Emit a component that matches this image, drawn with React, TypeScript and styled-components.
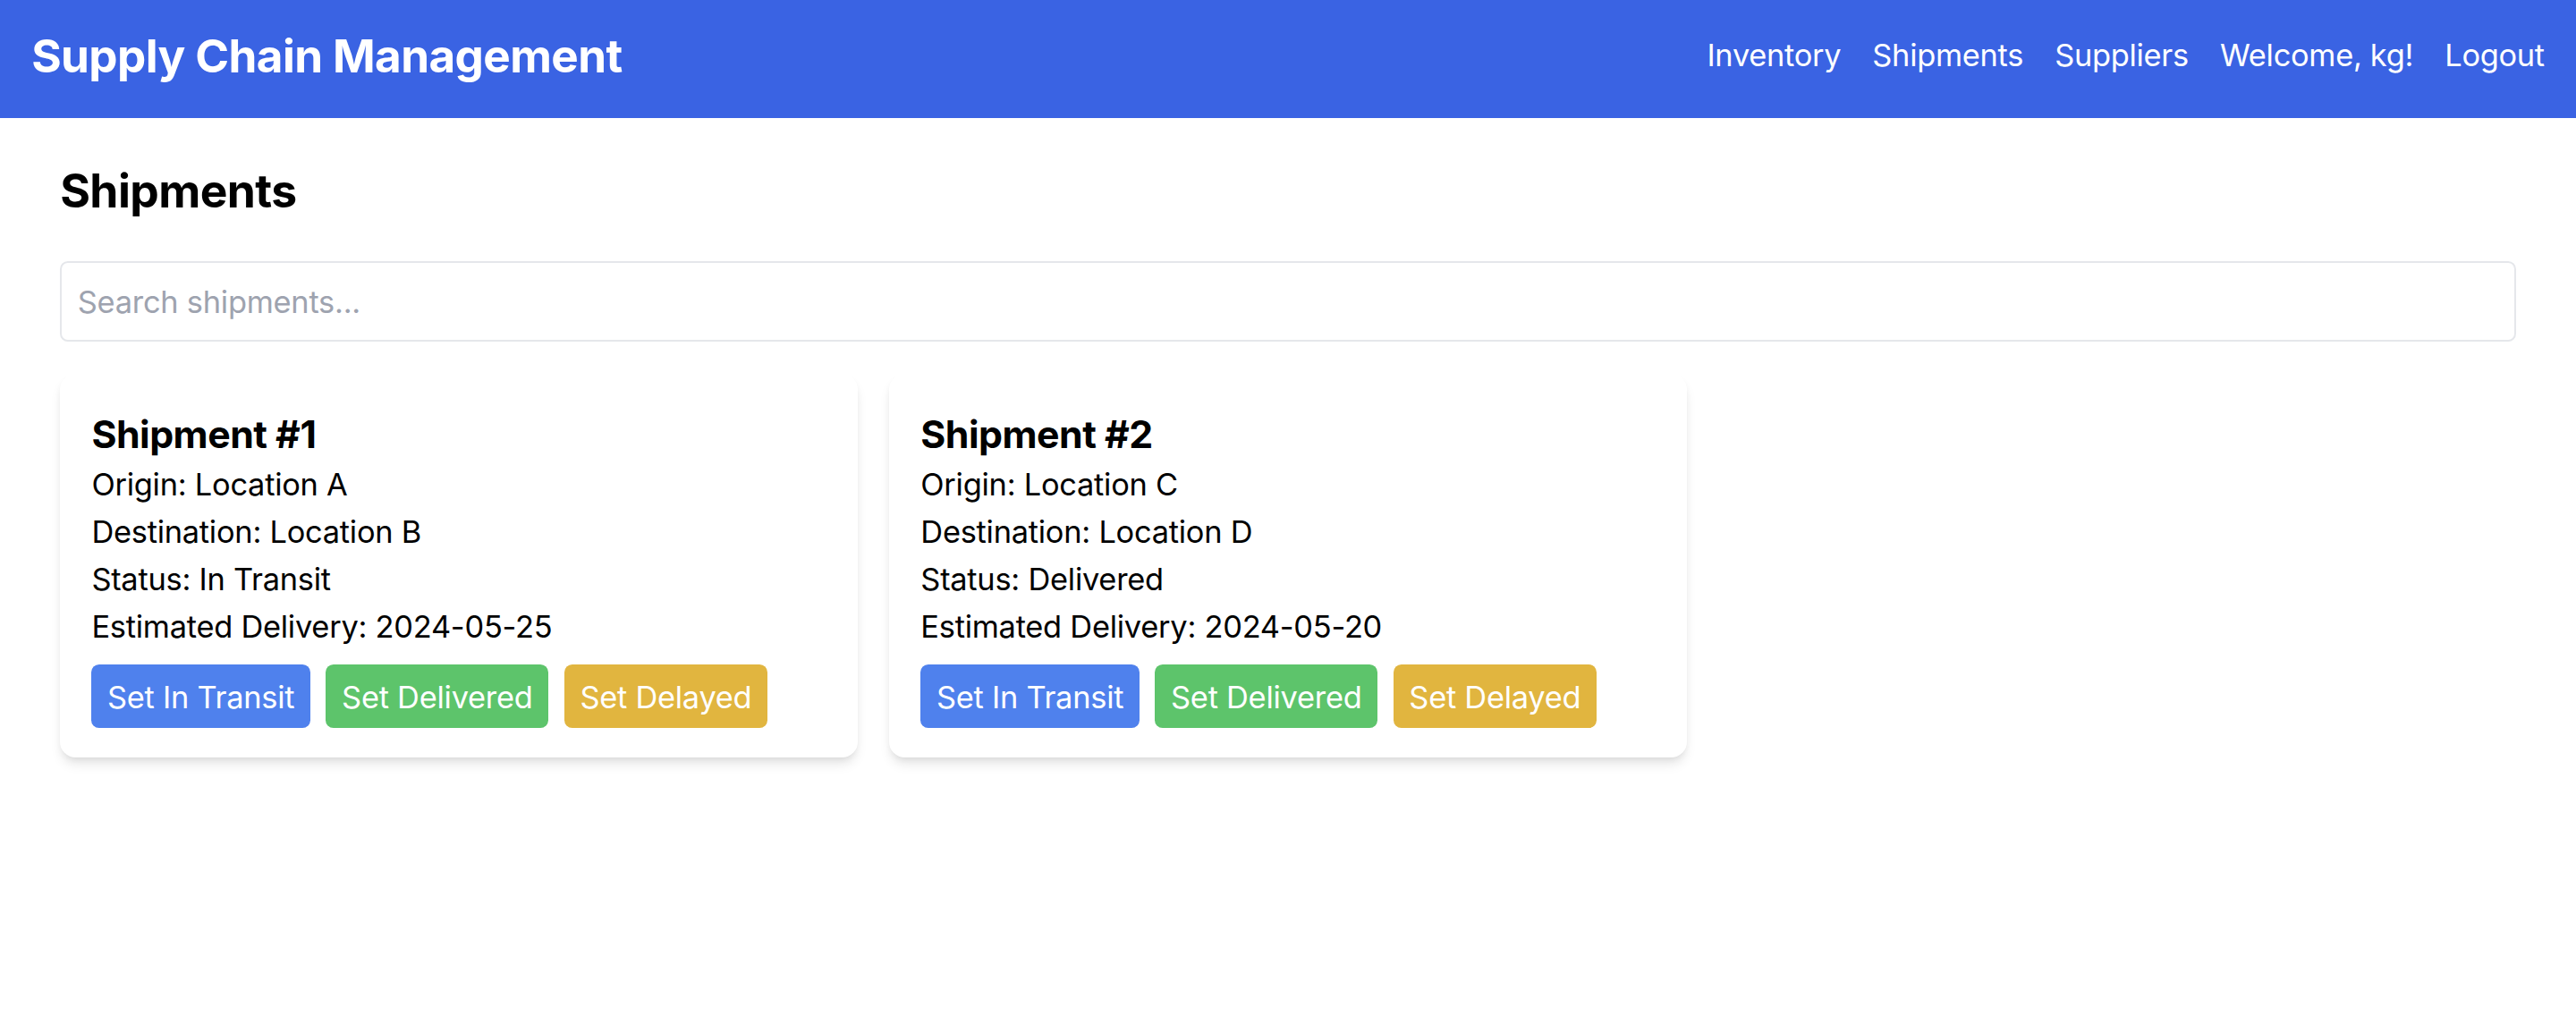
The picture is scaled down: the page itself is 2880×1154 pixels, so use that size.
import React from "react";
import styled, { createGlobalStyle } from "styled-components";

const GlobalStyle = createGlobalStyle`
  html, body { margin: 0; padding: 0; background: #ffffff; }
  body {
    font-family: Inter, "Noto Sans", "Liberation Sans", sans-serif;
    color: #000000;
    -webkit-font-smoothing: antialiased;
  }
  * { box-sizing: border-box; }
`;

const Header = styled.header`
  display: flex;
  align-items: center;
  justify-content: space-between;
  height: 132px;
  padding: 0 35.2px 7px;
  background: #3a63e3;
  color: #ffffff;
`;

const Brand = styled.h1`
  margin: 0;
  font-size: 51.2px;
  line-height: 70.4px;
  font-weight: 700;
  letter-spacing: -0.6px;
`;

const Nav = styled.nav`
  display: flex;
  align-items: center;
  gap: 35.2px;
`;

const NavItem = styled.span`
  font-size: 34.4px;
  line-height: 52.8px;
  letter-spacing: -0.3px;
  color: #ffffff;
`;

const Main = styled.main`
  max-width: 2816px;
  margin: 0 auto;
  padding: 46px 35.2px 35.2px;
`;

const PageTitle = styled.h2`
  margin: 0 0 44px;
  font-size: 51.6px;
  line-height: 70.4px;
  font-weight: 700;
  letter-spacing: -0.6px;
`;

const SearchInput = styled.input`
  display: block;
  width: 100%;
  height: 90px;
  margin: 0 0 35.2px;
  padding: 0 17.6px;
  border: 2px solid #e5e7eb;
  border-radius: 8.8px;
  font-family: inherit;
  font-size: 34.4px;
  line-height: 52.8px;
  letter-spacing: -0.25px;
  color: #000;
  outline: none;
  &::placeholder { color: #9ea3af; }
`;

const Grid = styled.div`
  display: grid;
  grid-template-columns: repeat(3, 1fr);
  gap: 35.2px;
`;

const Card = styled.div`
  background: #ffffff;
  border-radius: 17.6px;
  padding: 37px 35.2px 33.4px;
  box-shadow: 0 8.8px 13.2px -2.2px rgba(0, 0, 0, 0.1),
    0 4.4px 8.8px -4.4px rgba(0, 0, 0, 0.1);
`;

const CardTitle = styled.h3`
  margin: 0;
  font-size: 42.8px;
  line-height: 61.6px;
  font-weight: 700;
  letter-spacing: -0.5px;
`;

const Line = styled.p`
  margin: 0;
  font-size: 34.4px;
  line-height: 52.8px;
  letter-spacing: -0.25px;
`;

const Actions = styled.div`
  display: flex;
  gap: 17.6px;
  margin-top: 16px;
`;

const Button = styled.button<{ $bg: string }>`
  border: none;
  border-radius: 8.8px;
  padding: 10.4px 17.6px 7.2px;
  background: ${(p) => p.$bg};
  color: #ffffff;
  font-family: inherit;
  font-size: 34.4px;
  line-height: 52.8px;
  letter-spacing: -0.25px;
  cursor: pointer;
`;

type Shipment = {
  id: number;
  origin: string;
  destination: string;
  status: string;
  eta: string;
};

const shipments: Shipment[] = [
  { id: 1, origin: "Location A", destination: "Location B", status: "In Transit", eta: "2024-05-25" },
  { id: 2, origin: "Location C", destination: "Location D", status: "Delivered", eta: "2024-05-20" },
];

export default function App() {
  return (
    <>
      <GlobalStyle />
      <Header>
        <Brand>Supply Chain Management</Brand>
        <Nav>
          <NavItem>Inventory</NavItem>
          <NavItem>Shipments</NavItem>
          <NavItem>Suppliers</NavItem>
          <NavItem>Welcome, kg!</NavItem>
          <NavItem>Logout</NavItem>
        </Nav>
      </Header>
      <Main>
        <PageTitle>Shipments</PageTitle>
        <SearchInput placeholder="Search shipments..." />
        <Grid>
          {shipments.map((s) => (
            <Card key={s.id}>
              <CardTitle>Shipment #{s.id}</CardTitle>
              <Line>Origin: {s.origin}</Line>
              <Line>Destination: {s.destination}</Line>
              <Line>Status: {s.status}</Line>
              <Line>Estimated Delivery: {s.eta}</Line>
              <Actions>
                <Button $bg="#4f81ed">Set In Transit</Button>
                <Button $bg="#5dc46b">Set Delivered</Button>
                <Button $bg="#e1b53f">Set Delayed</Button>
              </Actions>
            </Card>
          ))}
        </Grid>
      </Main>
    </>
  );
}
